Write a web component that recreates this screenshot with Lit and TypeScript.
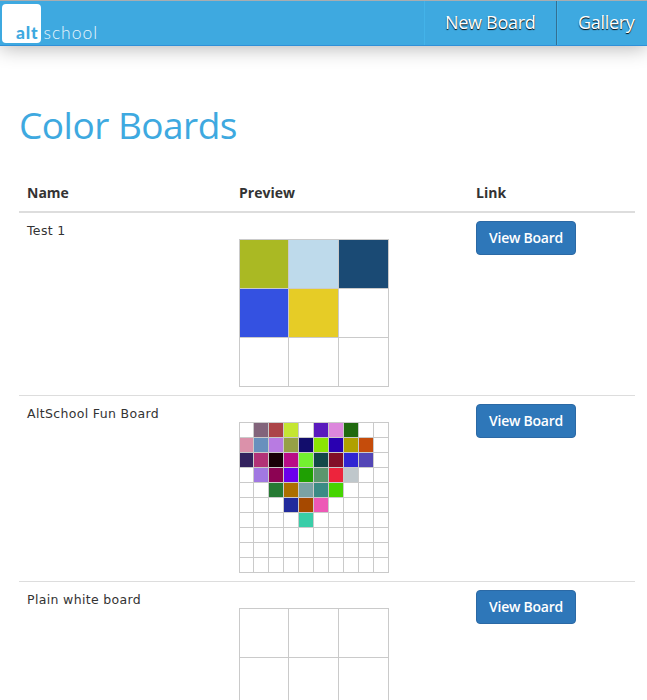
import { LitElement, html, css } from "lit";
import { customElement, property } from "lit/decorators.js";

interface Board {
  name: string;
  size: number;
  colors: string[];
}

const boards: Board[] = [
  {
    name: "Test 1",
    size: 3,
    colors: ["#aab923", "#bedaeb", "#1a4a74", "#3451e1", "#e6cc26"],
  },
  {
    name: "AltSchool Fun Board",
    size: 10,
    colors: [
      "", "#82647b", "#ac4448", "#c4e633", "", "#5a1abd", "#dc87dc", "#20690f", "", "",
      "#db91aa", "#6890bd", "#b87be2", "#96a046", "#120d6c", "#8be604", "#2900b1", "#b0a000", "#c54c0b", "",
      "#33225e", "#b23277", "#180006", "#b90c86", "#73f130", "#124848", "#820f28", "#3025d2", "#5346b6", "",
      "", "#a178e2", "#8c0353", "#6b00eb", "#1fa003", "#5c966d", "#ed243c", "#bfc7cb", "", "",
      "", "", "#267a33", "#ac6f00", "#7aa2a4", "#3b8b85", "#46d402", "", "", "",
      "", "", "", "#212a9c", "#a64900", "#ed58b6", "", "", "", "",
      "", "", "", "", "#39cda8",
    ],
  },
  { name: "Plain white board", size: 3, colors: [] },
];

@customElement("color-board")
class ColorBoard extends LitElement {
  @property({ attribute: false }) board!: Board;

  static styles = css`
    :host {
      display: block;
    }
    .grid {
      box-sizing: border-box;
      width: 150px;
      display: grid;
      gap: 1px;
      padding: 1px;
      background: #cacaca;
    }
    .three {
      grid-template: repeat(3, 48px) / 48px 49px 49px;
    }
    .ten {
      grid-template: repeat(10, 14px) / 13px repeat(9, 14px);
    }
    .cell {
      background: #fff;
    }
  `;

  render() {
    const { size, colors } = this.board;
    return html`<div class="grid ${size === 3 ? "three" : "ten"}">
      ${Array.from(
        { length: size * size },
        (_, i) => html`<div class="cell" style="background:${colors[i] || "#fff"}"></div>`
      )}
    </div>`;
  }
}

@customElement("app-root")
class AppRoot extends LitElement {
  static styles = css`
    :host {
      display: block;
      height: 700px;
      overflow: hidden;
      background: #fff;
      color: #333;
      font-family: "Open Sans", "Noto Sans", sans-serif;
    }
    .bar {
      box-sizing: border-box;
      height: 46px;
      display: flex;
      justify-content: space-between;
      background: #3ea9e0;
      border-top: 1px solid #a9adb0;
      border-bottom: 1px solid #2f90d8;
      box-shadow: 0 2px 20px rgba(0, 0, 0, 0.3);
    }
    .logo {
      display: block;
      width: 110px;
      height: 44px;
    }
    .alt {
      font: 900 17.5px Lato, sans-serif;
      fill: #3ea9e0;
    }
    .school {
      font: 300 17.5px Lato, sans-serif;
      fill: #e6f5fc;
    }
    .nav {
      display: flex;
    }
    .item {
      box-sizing: border-box;
      height: 44px;
      line-height: 43px;
      font-size: 18px;
      letter-spacing: -0.3px;
      color: #fff;
      text-shadow: 0 1px 1px #000;
      white-space: nowrap;
      border-left: 1px solid #43b3e9;
      border-right: 1px solid #346f91;
      padding-left: 20px;
    }
    .new {
      width: 133px;
    }
    .gallery {
      width: 90px;
      border-right: 0;
    }
    .title {
      margin: 53px 0 0 19px;
      font-size: 37px;
      line-height: 52px;
      font-weight: 400;
      letter-spacing: -0.5px;
      color: #3ea9e0;
    }
    .table {
      margin: 23px 12px 0 19px;
    }
    .head,
    .row {
      display: grid;
      grid-template-columns: 212px 237px 1fr;
      padding: 0 8px;
    }
    .head {
      height: 37px;
      line-height: 38px;
      font-size: 14px;
      font-weight: 700;
      border-bottom: 2px solid #ddd;
    }
    .row {
      align-items: start;
      padding-top: 8px;
      padding-bottom: 8px;
      border-bottom: 1px solid #ddd;
    }
    .name {
      font-family: "DejaVu Sans", sans-serif;
      font-size: 12.5px;
      letter-spacing: 0.34px;
      line-height: 20px;
    }
    .preview {
      padding-top: 18px;
    }
    .button {
      box-sizing: border-box;
      justify-self: start;
      width: 100px;
      height: 34px;
      padding: 0;
      border: 1px solid #2b69a5;
      border-radius: 4px;
      background: #2e77b9;
      color: #fff;
      font: 600 14px/32px "Open Sans", sans-serif;
      letter-spacing: -0.25px;
      text-align: center;
      white-space: nowrap;
    }
  `;

  render() {
    return html`
      <header class="bar">
        <svg class="logo" viewBox="0 1 110 44">
          <rect x="2" y="4" width="39" height="39" rx="4" fill="#fff" />
          <text class="alt" x="16" y="39" textLength="21.5">alt</text>
          <text class="school" x="43.5" y="39" textLength="53.5">school</text>
        </svg>
        <nav class="nav">
          <a class="item new">New Board</a>
          <a class="item gallery">Gallery</a>
        </nav>
      </header>
      <h1 class="title">Color Boards</h1>
      <main class="table">
        <div class="head"><span>Name</span><span>Preview</span><span>Link</span></div>
        ${boards.map(
          (b) => html`<div class="row">
            <span class="name">${b.name}</span>
            <div class="preview"><color-board .board=${b}></color-board></div>
            <button class="button">View Board</button>
          </div>`
        )}
      </main>
    `;
  }
}
